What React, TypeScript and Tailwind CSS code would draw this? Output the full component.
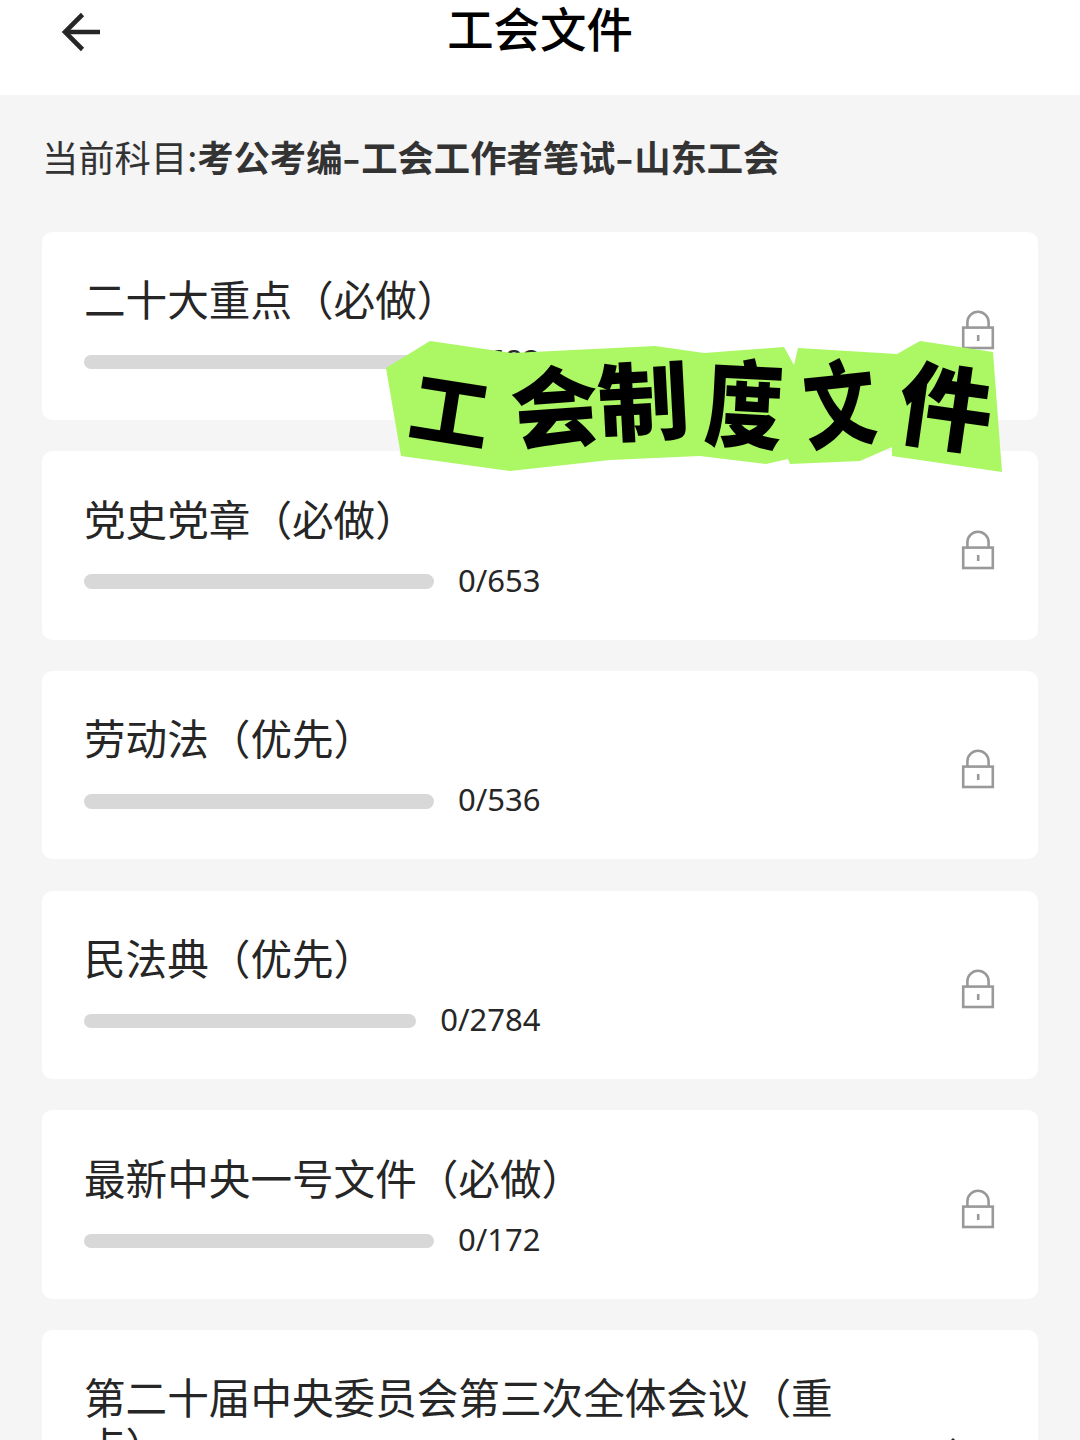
import type React from "react"

interface Chapter {
  title: string
  total: number
  locked: boolean
}

const chapters: Chapter[] = [
  { title: "二十大重点（必做）", total: 682, locked: true },
  { title: "党史党章（必做）", total: 653, locked: true },
  { title: "劳动法（优先）", total: 536, locked: true },
  { title: "民法典（优先）", total: 2784, locked: true },
  { title: "最新中央一号文件（必做）", total: 172, locked: true },
  { title: "第二十届中央委员会第三次全体会议（重点）", total: 120, locked: false },
]

const BackArrow: React.FC = () => (
  <svg width="40" height="40" viewBox="0 0 40 40" fill="none" stroke="#262626" strokeWidth="4.6">
    <path d="M22.5 2.5 L5 20 L22.5 37.5" />
    <path d="M5 20 H40" />
  </svg>
)

const LockIcon: React.FC = () => (
  <svg width="34" height="40" viewBox="0 0 34 40" fill="none" stroke="#999999" strokeWidth="2.6">
    <path d="M6.4 17.5 V12.3 a10.6 10.6 0 0 1 21.2 0 V17.5" />
    <rect x="2.2" y="17.6" width="29.6" height="20.4" />
    <path d="M17.2 25 v6" />
  </svg>
)

const ChevronUpIcon: React.FC = () => (
  <svg width="40" height="24" viewBox="0 0 40 24" fill="none" stroke="#262626" strokeWidth="5">
    <path d="M3 20 L20 3.5 L37 20" />
  </svg>
)

// Each character is tilted on its own, like cut-out paper letters
const stickerLetters = [
  { char: "工", transform: "translate(64 72.5) rotate(9) scale(0.87 0.86)" },
  { char: "会", transform: "translate(169 69) rotate(-4) scale(0.95 0.96)" },
  { char: "制", transform: "translate(257.5 63) rotate(-3) scale(1 0.93)" },
  { char: "度", transform: "translate(358 66) rotate(3) scale(0.85 1.04)" },
  { char: "文", transform: "translate(454 66) rotate(-6) scale(0.78 1.02)" },
  { char: "件", transform: "translate(559.5 69) rotate(8) scale(1.02 1.01)" },
]

const Sticker: React.FC = () => (
  <svg
    className="absolute left-[386px] top-[340px]"
    width="617"
    height="133"
    viewBox="0 0 617 133"
  >
    <polygon
      fill="#abf764"
      points="0,28 44,1 126,13 269,6 318,13 398,7 408,25 412,8 511,14 534,1 607,12 616,132 506,116 506,107 474,121 404,124 402,119 380,124 314,116 224,120 124,131 15,116"
    />
    {stickerLetters.map(({ char, transform }) => (
      <text
        key={char}
        transform={transform}
        y="33"
        textAnchor="middle"
        fontSize="92"
        className="font-black"
      >
        {char}
      </text>
    ))}
  </svg>
)

const ChapterCard: React.FC<{ chapter: Chapter }> = ({ chapter }) => (
  <div className="flex shrink-0 items-center justify-between rounded-[10px] bg-white pt-[42.5px] pr-[43px] pb-[39.9px] pl-[42px]">
    <div className="w-[770px]">
      <h2 className="text-[41.6px] leading-[49px] text-[#262626]">{chapter.title}</h2>
      <div className="mt-[21px] flex h-9 w-[456.5px] items-center gap-6">
        <div className="h-[14.5px] flex-1 rounded-full bg-[#d8d8d8]" />
        <span className="relative -top-0.5 font-['Noto_Sans'] text-[31px] leading-9 text-[#262626]">
          0/{chapter.total}
        </span>
      </div>
    </div>
    {chapter.locked ? (
      <div className="pt-[6px]">
        <LockIcon />
      </div>
    ) : (
      <div className="mr-[22px]">
        <ChevronUpIcon />
      </div>
    )}
  </div>
)

const Dash: React.FC = () => (
  <span className="inline-block w-[18.8px] scale-x-[1.4] text-center">-</span>
)

export default function App() {
  return (
    <div className="relative flex h-[1440px] w-[1080px] flex-col overflow-hidden bg-[#f5f5f5] font-['Noto_Sans_CJK_SC',sans-serif]">
      <header className="grid h-[95px] shrink-0 grid-cols-[1fr_auto_1fr] items-start bg-white px-[60px]">
        <button type="button" className="mt-3 w-10" aria-label="返回">
          <BackArrow />
        </button>
        <h1 className="text-[46.4px] font-medium leading-[54px] text-black">工会文件</h1>
      </header>

      <p className="mt-[35px] mb-[49.5px] flex h-[52px] shrink-0 items-center whitespace-nowrap px-[42px] text-[36.3px] leading-[52px] text-[#333333]">
        当前科目:
        <strong className="font-bold">
          考公考编
          <Dash />
          工会工作者笔试
          <Dash />
          山东工会
        </strong>
      </p>

      <main className="flex flex-col gap-[31.3px] px-[42px]">
        {chapters.map((chapter) => (
          <ChapterCard key={chapter.title} chapter={chapter} />
        ))}
      </main>

      <Sticker />
    </div>
  )
}
